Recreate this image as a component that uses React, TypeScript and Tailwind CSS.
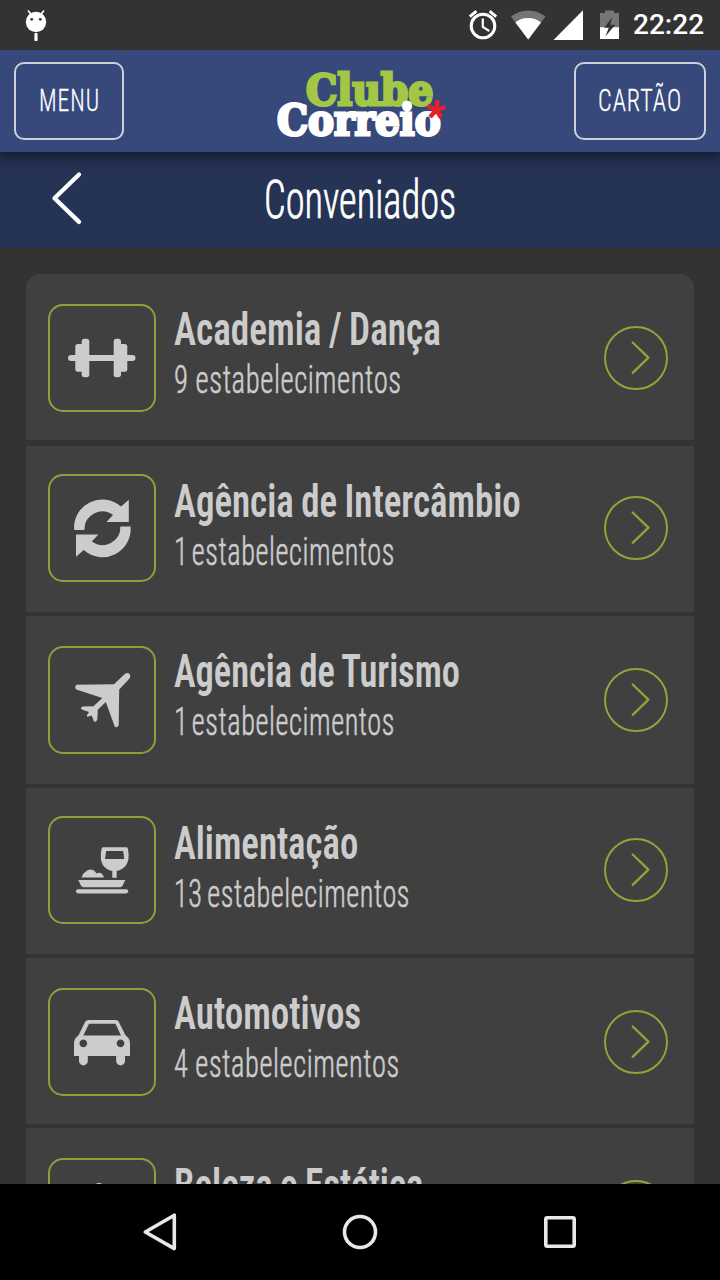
import { useLayoutEffect, useRef, useState } from "react";
import type { ReactNode } from "react";

/** Single line of text squeezed horizontally so that it spans `width` pixels. */
function FitText({ width, className, children }: { width: number; className: string; children: ReactNode }) {
  const ref = useRef<HTMLSpanElement>(null);
  const [scale, setScale] = useState(1);
  useLayoutEffect(() => {
    if (ref.current) setScale(width / ref.current.offsetWidth);
  }, [width, children]);
  return (
    <span className="block" style={{ width }}>
      <span
        ref={ref}
        className={`inline-block origin-left whitespace-nowrap align-top ${className}`}
        style={{ transform: `scaleX(${scale})` }}
      >
        {children}
      </span>
    </span>
  );
}

function StatusBar() {
  return (
    <div className="relative z-20 flex h-[50px] shrink-0 items-center justify-between bg-[#333333]">
      <svg width="72" height="50" viewBox="0 0 72 50" fill="#fff">
        <circle cx="36" cy="22" r="10.2" />
        <path d="M28 10.5l4 5M44 10.5l-4 5" stroke="#fff" strokeWidth="1.6" />
        <circle cx="31.7" cy="19.3" r="1.4" fill="#333" />
        <circle cx="40.3" cy="19.3" r="1.4" fill="#333" />
        <rect x="34.4" y="33" width="3.2" height="8" rx="0.8" />
      </svg>
      <div className="flex items-center pr-[16px]">
        <svg width="173" height="50" viewBox="460 0 173 50">
          <circle cx="483" cy="26" r="11.8" fill="none" stroke="#fff" strokeWidth="3" />
          <path d="M482.8 18.5V27l6.5 4" fill="none" stroke="#fff" strokeWidth="2.2" />
          <path d="M469.8 16.6l6.6-5.4M496.2 16.6l-6.6-5.4" stroke="#fff" strokeWidth="3" />
          <path d="M511 16.600a27.500 27.500 0 0 1 34.500 0L528.200 39.500z" fill="#757575" />
          <path d="M515.400 22.400a20.500 20.500 0 0 1 25.600 0L528.200 39.500z" fill="#fff" />
          <path d="M583 10.300V40h-29.500z" fill="#fff" />
          <path d="M600 13h5v-2.600h9V13h5v14.500h-19z" fill="#757575" />
          <path d="M600 27.200h19V39h-19z" fill="#fff" />
          <path d="M612 17.500l-7.800 10.300h4.600l-3.500 8.700 10-11.800h-5z" fill="#333" />
        </svg>
        <FitText width={71} className="font-['Roboto'] text-[28px] leading-[52px] font-medium text-white">
          22:22
        </FitText>
      </div>
    </div>
  );
}

function Logo() {
  return (
    <div className="relative h-[78px] w-[176px]">
      <div className="absolute top-[3px] left-[34px]">
        <FitText
          width={127}
          className="font-['DejaVu_Serif'] text-[43px] leading-[50px] font-bold text-[#a3c644] [-webkit-text-stroke:3px_#a3c644]"
        >
          Clube
        </FitText>
      </div>
      <div className="absolute top-[33px] left-[5px]">
        <FitText
          width={164}
          className="font-['DejaVu_Serif'] text-[43px] leading-[50px] font-bold text-white [-webkit-text-stroke:3px_#ffffff]"
        >
          Correio
        </FitText>
      </div>
      <svg className="absolute top-[36px] left-[152px]" width="24" height="24" viewBox="0 0 24 24">
        <path d="M12.500 12L13.500 2M12.500 12l9-3M12.500 12l4.500 7.500M12.500 12l-6.500 7M12.500 12L3.500 8" stroke="#e8202a" strokeWidth="4.400" />
      </svg>
    </div>
  );
}

function Header() {
  return (
    <header className="relative z-10 flex h-[102px] shrink-0 items-center justify-between bg-[#36497a] px-[14px] shadow-[0_2px_14px_2px_#111426]">
      <button className="flex h-[78px] w-[110px] items-center justify-center rounded-[10px] border-2 border-[#cfd1da]">
        <FitText width={61} className="font-['Roboto'] text-[30.500px] leading-[40px] font-light tracking-[0.04em] text-white [font-stretch:75%] [-webkit-text-stroke:0.3px_#ffffff]">
          MENU
        </FitText>
      </button>
      <Logo />
      <button className="-ml-[22px] flex h-[78px] w-[132px] items-center justify-center rounded-[10px] border-2 border-[#cfd1da]">
        <FitText width={84} className="font-['Roboto'] text-[30.500px] leading-[40px] font-light tracking-[0.04em] text-white [font-stretch:75%] [-webkit-text-stroke:0.3px_#ffffff]">
          CARTÃO
        </FitText>
      </button>
    </header>
  );
}

const DumbbellIcon = (
  <path d="M23 51h4.300v-8.500a2.500 2.500 0 0 1 2.500-2.500h3.900v-2.500a2.800 2.800 0 0 1 2.800-2.800h2a2.800 2.800 0 0 1 2.800 2.800V51h24.400V37.500a2.800 2.800 0 0 1 2.800-2.800h1.700a2.800 2.800 0 0 1 2.800 2.800V40h3.800a2.500 2.500 0 0 1 2.500 2.500V51H84.500a3 3 0 0 1 0 6h-5.200v8.200a2.500 2.500 0 0 1-2.500 2.500H73v2.800a2.800 2.800 0 0 1-2.800 2.800h-1.700a2.800 2.800 0 0 1-2.800-2.800V57H41.300v13.500a2.800 2.800 0 0 1-2.800 2.800h-2a2.800 2.800 0 0 1-2.800-2.800v-2.800h-3.900a2.500 2.500 0 0 1-2.500-2.500V57H23a3 3 0 0 1 0-6z" />
);

const ExchangeIcon = (
  <>
    <path d="M26.200 56A28.200 28.200 0 0 1 73 32.500L80.800 25.800V48H58.400L65 41A18 18 0 0 0 36.400 56z" />
    <path d="M26.200 56A28.200 28.200 0 0 1 73 32.500L80.800 25.800V48H58.400L65 41A18 18 0 0 0 36.400 56z" transform="rotate(180 54.400 54.300)" />
  </>
);

const PlaneIcon = (
  <path d="M28.500 38.800L66 38.200L76.500 28.200Q79.500 26 81.500 28Q83.300 30.500 81 33L71.200 43.500L70.700 79Q70 82 66.800 80.800L57.800 56L49.800 63.800L49.300 73.500Q48 76.500 46 75.500L43.700 69.500L39.500 70.800Q38.300 70 39 69L41 66L33.800 63.500Q31.800 61 35 60.500L45.500 60.300L54.300 52L28.300 43.600Q26 41 28.500 38.800z" />
);

const FoodIcon = (
  <>
    <path
      fillRule="evenodd"
      d="M55 31.300h23.500q1.200 0 1.500 1.700q2 11-2 16.200q-3.500 4.800-9.300 5.800v6.700h-4.400V55q-6-1-9.300-5.800q-3.500-5.200-1.500-16.200q.3-1.700 1.500-1.700zM58.200 35L57 43h19.300L75.200 35z"
    />
    <path d="M33.500 61.500q.7-3.800 3.500-5.300q4-4.200 8.500-1.900q2 1.200 3 3.200q3-1.500 5.300.3q1.700 1.500 2.200 3.700z" />
    <path d="M30.300 64h47l-2.600 5.500q-1 1.800-2.700 1.800H35.600q-1.700 0-2.700-1.800z" />
    <rect x="28" y="73.200" width="52.200" height="4.200" rx="2.100" />
  </>
);

const CarIcon = (
  <path
    fillRule="evenodd"
    d="M40.500 32h27.400q2 0 2.800 1.700L77.500 47.200Q82 50.500 82 55v13H77v5a4.400 4.400 0 0 1-8.800 0v-5H39.800v5a4.400 4.400 0 0 1-8.800 0v-5H26V55q0-4.500 4.500-7.800L37.200 33.700Q38.200 32 40.500 32zM41 35.800L35.300 47.500H73L67.500 35.800zM35.300 51.500a3.900 3.900 0 1 0 .01 0zM72.500 51.500a3.900 3.900 0 1 0 .01 0z"
  />
);

const BeautyIcon = <circle cx="51" cy="31" r="6" />;

type Category = {
  name: string;
  nameWidth: number;
  count: string;
  countWidth: number;
  countClass: string;
  icon: ReactNode;
  rowClass: string;
  textClass: string;
};

const categories: Category[] = [
  { name: "Academia / Dança", nameWidth: 267, count: "9 estabelecimentos", countWidth: 228, countClass: "", icon: DumbbellIcon, rowClass: "h-[166px] mb-[2px] pt-[30px] rounded-t-[14px]", textClass: "mt-[1px]" },
  { name: "Agência de Intercâmbio", nameWidth: 347, count: "1 estabelecimentos", countWidth: 221, countClass: "[word-spacing:-0.12em]", icon: ExchangeIcon, rowClass: "h-[166px] pt-[28px]", textClass: "mt-[3px]" },
  { name: "Agência de Turismo", nameWidth: 286, count: "1 estabelecimentos", countWidth: 221, countClass: "[word-spacing:-0.12em]", icon: PlaneIcon, rowClass: "h-[168px] pt-[30px]", textClass: "mt-[1px]" },
  { name: "Alimentação", nameWidth: 184, count: "13 estabelecimentos", countWidth: 236, countClass: "[word-spacing:-0.08em]", icon: FoodIcon, rowClass: "h-[166px] pt-[28px]", textClass: "mt-[3px]" },
  { name: "Automotivos", nameWidth: 187, count: "4 estabelecimentos", countWidth: 226, countClass: "", icon: CarIcon, rowClass: "h-[166px] pt-[30px]", textClass: "mt-[1px]" },
  { name: "Beleza e Estética", nameWidth: 249, count: "8 estabelecimentos", countWidth: 228, countClass: "", icon: BeautyIcon, rowClass: "h-[166px] pt-[30px]", textClass: "mt-[3px]" },
];

function CategoryRow({ item }: { item: Category }) {
  return (
    <li className={`flex shrink-0 items-start bg-[#404040] pr-[26px] pl-[22px] ${item.rowClass}`}>
      <div className="size-[108px] shrink-0 rounded-[15px] border-2 border-[#8f9f3b]">
        <svg width="104" height="104" viewBox="2 2 104 104" fill="#cccccc">
          {item.icon}
        </svg>
      </div>
      <div className={`ml-[18px] flex-1 ${item.textClass}`}>
        <FitText width={item.nameWidth} className="font-['Roboto'] text-[46px] leading-[48px] font-semibold text-[#cccccc] [font-stretch:75%] [word-spacing:-0.03em]">
          {item.name}
        </FitText>
        <div className="mt-[3px]">
          <FitText width={item.countWidth} className={`font-['Roboto'] text-[38.500px] leading-[48px] font-light tracking-[0.02em] text-[#cccccc] [font-stretch:75%] [-webkit-text-stroke:0.6px_#cccccc] ${item.countClass}`}>
            {item.count}
          </FitText>
        </div>
      </div>
      <svg className="mt-[22px] shrink-0" width="64" height="64" viewBox="0 0 64 64" fill="none" stroke="#93a338">
        <circle cx="32" cy="32" r="31" strokeWidth="2" />
        <path d="M28.700 16.500L44.400 31.600L28.700 46.800" strokeWidth="2.300" strokeLinecap="round" strokeLinejoin="round" />
      </svg>
    </li>
  );
}

function NavigationBar() {
  return (
    <nav className="flex h-[96px] shrink-0 items-center justify-center gap-[152px] bg-black">
      <svg width="48" height="48" viewBox="0 0 48 48" fill="none" stroke="#e8e8e8" strokeWidth="3.600" strokeLinejoin="round">
        <path d="M38.300 7.200v33.400L9.300 24z" />
      </svg>
      <svg width="48" height="48" viewBox="0 0 48 48" fill="none" stroke="#e8e8e8" strokeWidth="3.600">
        <circle cx="24" cy="24" r="15.500" />
      </svg>
      <svg width="48" height="48" viewBox="0 0 48 48" fill="none" stroke="#e8e8e8" strokeWidth="3.600">
        <rect x="9.800" y="9.800" width="28.400" height="28.400" rx="1.500" />
      </svg>
    </nav>
  );
}

export default function App() {
  return (
    <div className="flex h-[1280px] w-[720px] flex-col overflow-hidden bg-[#333333]">
      <StatusBar />
      <Header />
      <div className="flex h-[96px] shrink-0 items-center bg-[#253355]">
        <svg className="ml-[42px]" width="48" height="64" viewBox="0 0 48 64" fill="none" stroke="#fff">
          <path d="M37 6.500L12.500 30.300L37 53.900" strokeWidth="4.300" strokeLinecap="round" strokeLinejoin="round" />
        </svg>
        <h1 className="ml-[174px]">
          <FitText width={192} className="font-['Roboto'] text-[53px] leading-[64px] font-light text-white [font-stretch:75%] [-webkit-text-stroke:0.7px_#ffffff]">
            Conveniados
          </FitText>
        </h1>
      </div>
      <main className="min-h-0 flex-1 overflow-hidden px-[26px] pt-[26px]">
        <ul className="flex flex-col gap-[4px]">
          {categories.map((item) => (
            <CategoryRow key={item.name} item={item} />
          ))}
        </ul>
      </main>
      <NavigationBar />
    </div>
  );
}
